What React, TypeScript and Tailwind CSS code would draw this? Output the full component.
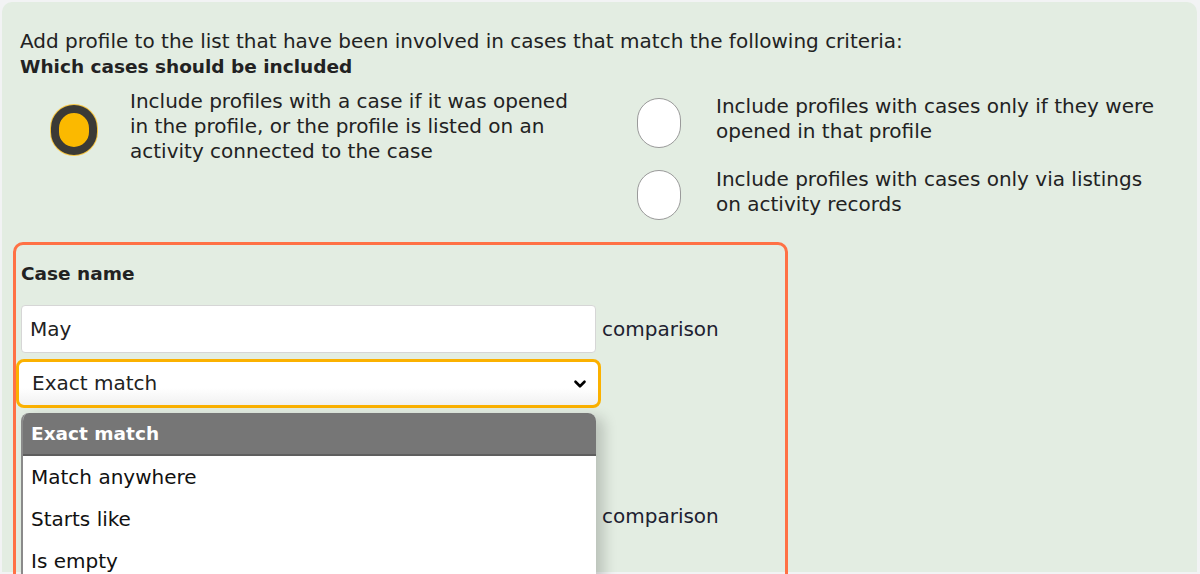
import { ChevronDown } from 'lucide-react'

const font = { fontFamily: '"DejaVu Sans", "Noto Sans", sans-serif' }

function Radio({ checked }: { checked?: boolean }) {
  if (checked) {
    return (
      <div className="h-[50px] w-[46px] shrink-0 rounded-full border-[8px] border-[#3b3a36] bg-[#fbb900] shadow-[0_0_0_1px_#f5c542]" />
    )
  }
  return <div className="h-[50px] w-[44px] shrink-0 rounded-full border border-[#9a9a9a] bg-white" />
}

const options = ['Exact match', 'Match anywhere', 'Starts like', 'Is empty']

export default function App() {
  return (
    <div className="h-[574px] w-[1200px] overflow-hidden bg-[#f2f3f4] pl-[2px] pr-[3px] pt-[2px] text-[20px] text-[#222]" style={font}>
      <div className="h-[570px] rounded-t-[10px] bg-[#e3ede2] px-[18px] pt-[27px] leading-[25px]">
        <p>Add profile to the list that have been involved in cases that match the following criteria:</p>
        <p className="text-[18.5px] font-bold">Which cases should be included</p>

        <div className="mt-[10px] grid grid-cols-[580px_1fr]">
          <div className="flex items-start">
            <div className="ml-[31px] mt-[16px]">
              <Radio checked />
            </div>
            <p className="ml-[33px] w-[455px]">
              Include profiles with a case if it was opened in the profile, or the profile is listed on an activity connected to the case
            </p>
          </div>
          <div className="flex flex-col gap-[19px] pt-[5px]">
            <div className="flex items-start">
              <div className="ml-[37px] mt-[4px]">
                <Radio />
              </div>
              <p className="ml-[35px] w-[445px]">Include profiles with cases only if they were opened in that profile</p>
            </div>
            <div className="flex items-start">
              <div className="ml-[37px] mt-[3px]">
                <Radio />
              </div>
              <p className="ml-[35px] w-[445px]">Include profiles with cases only via listings on activity records</p>
            </div>
          </div>
        </div>

        <div className="relative -ml-[7px] mt-[22px] h-[400px] w-[775px] rounded-[10px] border-[3px] border-[#ff7145] pl-[5px] pt-[16px]">
          <p className="text-[18.5px] font-bold">Case name</p>

          <div className="mt-[19px] flex items-center gap-[6px]">
            <div className="flex h-[48px] w-[575px] items-center rounded-[4px] border border-[#d6d6d6] bg-white px-[8px]">May</div>
            <span className="text-[#1d2130]">comparison</span>
          </div>

          <div className="-ml-[5px] mt-[6px] flex h-[49px] w-[585px] items-center justify-between rounded-[8px] border-[3px] border-[#fbb100] bg-gradient-to-b from-white from-60% to-[#f1f1f1] pl-[13px] pr-[9px]">
            <span>Exact match</span>
            <ChevronDown size={18} strokeWidth={3.5} className="text-black" />
          </div>

          <div className="mt-[84px] flex items-center gap-[6px]">
            <div className="h-[48px] w-[575px] rounded-[4px] border border-[#d6d6d6] bg-white" />
            <span className="text-[#1d2130]">comparison</span>
          </div>

          <div className="absolute left-[5px] top-[168px] w-[575px] overflow-hidden rounded-t-[8px] border-l-[2px] border-[#8a8a8a] bg-white shadow-[8px_4px_14px_rgba(0,0,0,0.18)]">
            {options.map((o, i) => (
              <div
                key={o}
                className={
                  i === 0
                    ? 'flex h-[43px] items-center border-b-[2px] border-[#5e5e5e] bg-[#767676] pl-[8px] text-[18.5px] font-bold text-white'
                    : 'flex h-[42px] items-center pl-[8px] text-[#111]'
                }
              >
                {o}
              </div>
            ))}
          </div>
        </div>
      </div>
    </div>
  )
}
